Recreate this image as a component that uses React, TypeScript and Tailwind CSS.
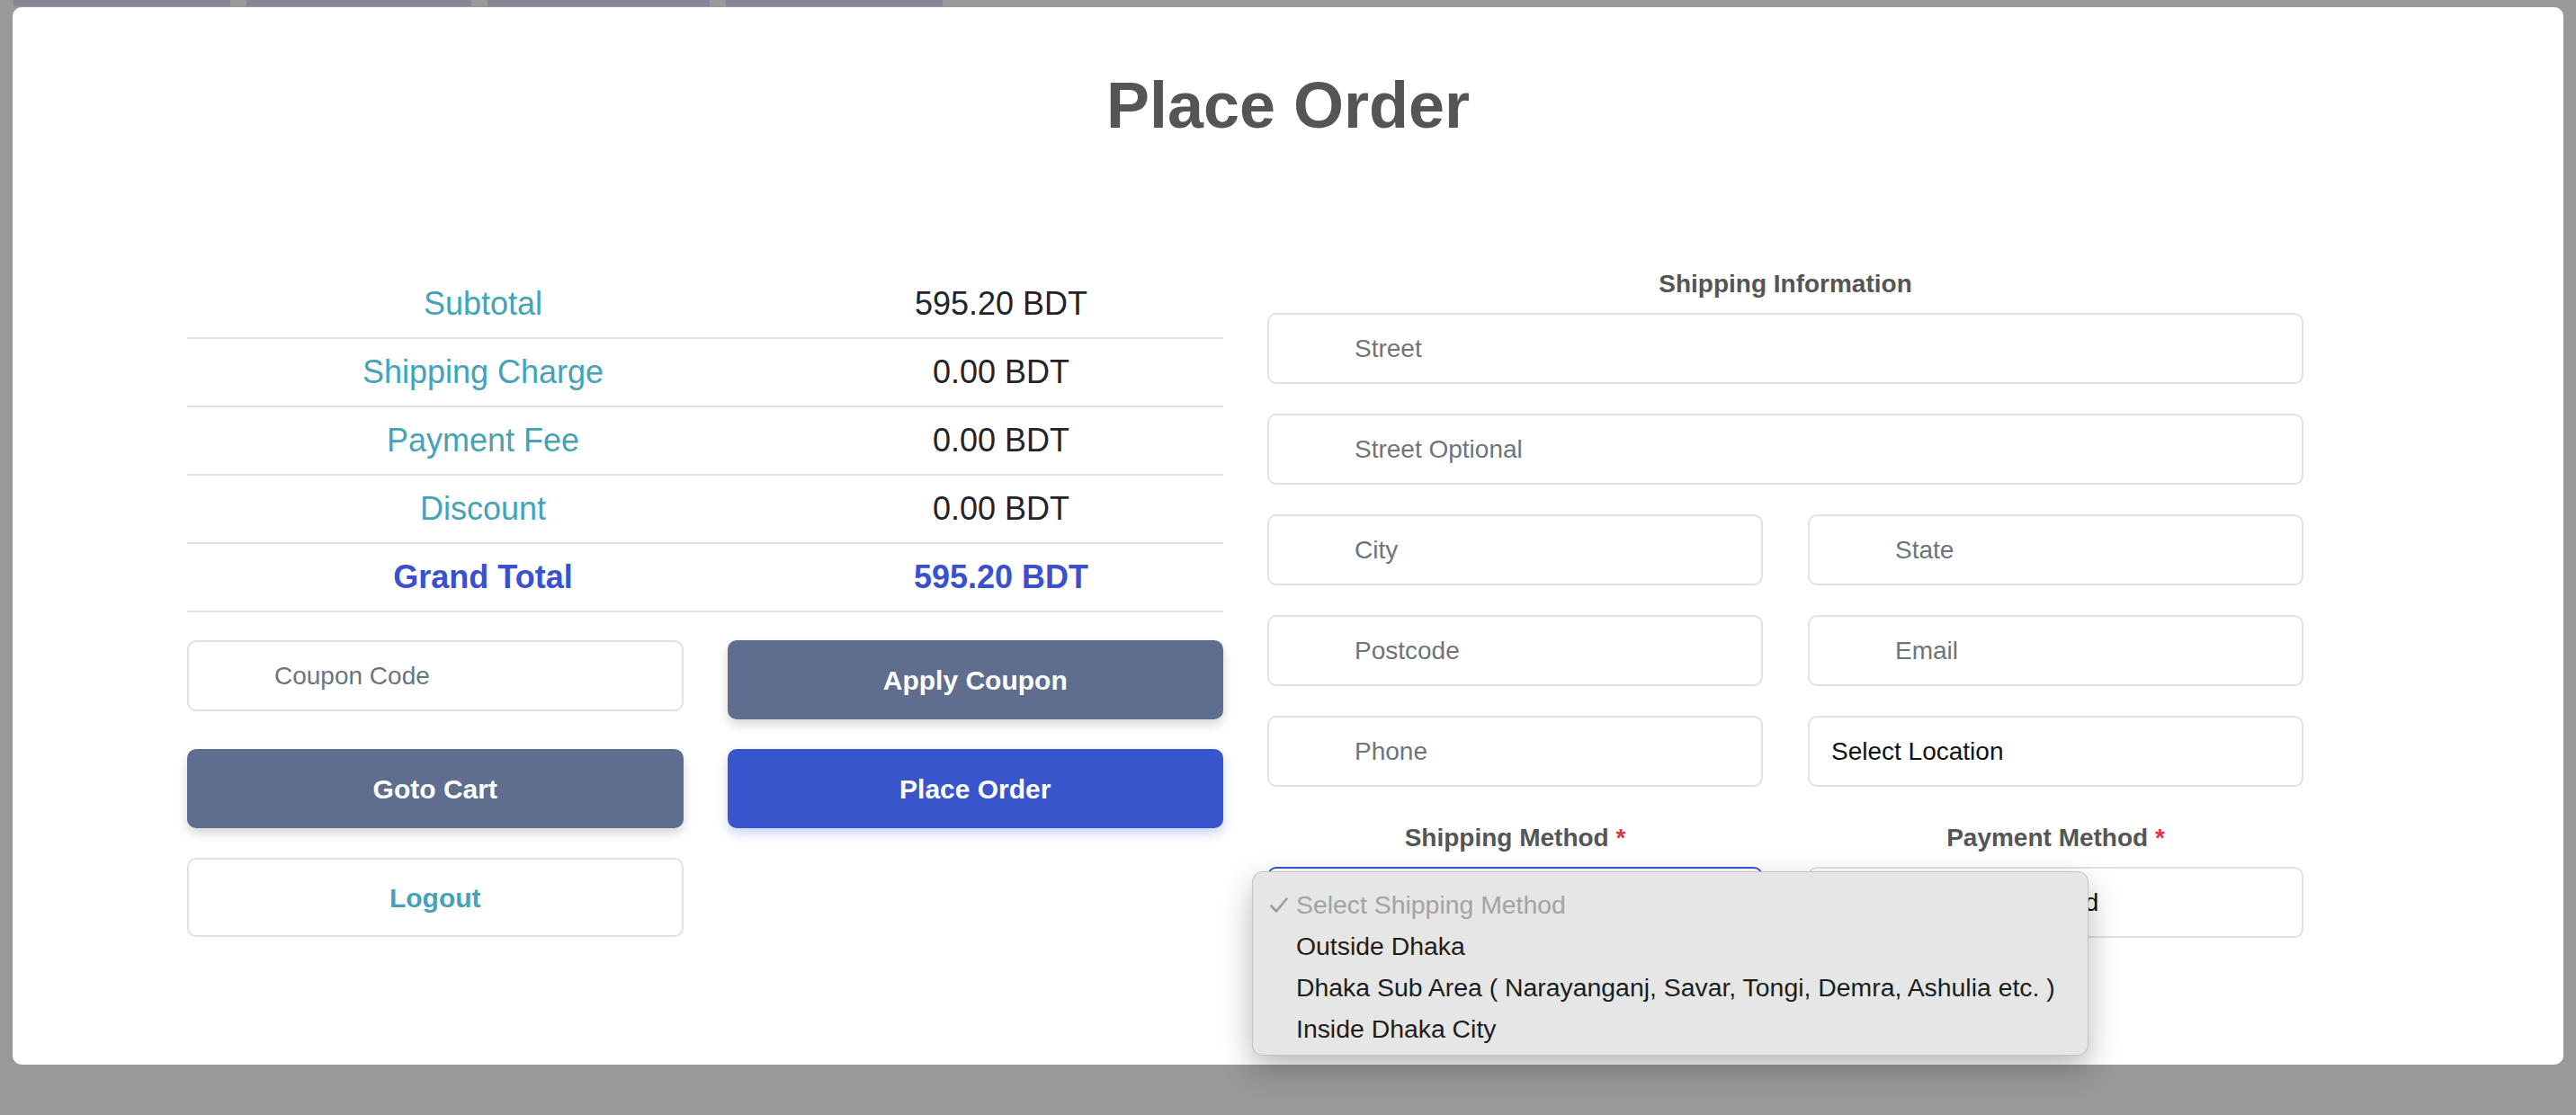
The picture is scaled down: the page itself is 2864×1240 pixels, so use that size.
import React, { FC, ReactElement } from 'react';

const summaryRows = [
  { label: 'Subtotal', value: '595.20 BDT' },
  { label: 'Shipping Charge', value: '0.00 BDT' },
  { label: 'Payment Fee', value: '0.00 BDT' },
  { label: 'Discount', value: '0.00 BDT' },
];

const shippingOptions = [
  'Outside Dhaka',
  'Dhaka Sub Area ( Narayanganj, Savar, Tongi, Demra, Ashulia etc. )',
  'Inside Dhaka City',
];

const inputClass =
  'h-[79px] w-full rounded-[10px] border-2 border-[#dee2e6] bg-white pl-[95px] text-[28px] text-[#212529] outline-none placeholder:text-[#6c757d]';

const Field: FC<{ placeholder: string }> = ({ placeholder }): ReactElement => (
  <input type="text" className={inputClass} placeholder={placeholder} />
);

const CheckMark: FC = (): ReactElement => (
  <svg className="h-[17px] w-[20px]" viewBox="0 0 20 17" fill="none" stroke="#9b9b9b" strokeWidth={2.6}>
    <path d="M1.5 9.5 L7 15.5 L18.5 1.5" strokeLinecap="round" strokeLinejoin="round" />
  </svg>
);

const ShippingDropdown: FC = (): ReactElement => (
  <div className="absolute left-[-17px] top-[5px] z-10 h-[205px] w-[930px] rounded-[12px] border border-black/15 bg-[#e5e6e5] pt-[13px] shadow-[0_14px_34px_rgba(0,0,0,0.28)]">
    <div className="flex h-[46px] items-center text-[28.4px] text-[#a3a3a3]">
      <div className="flex w-[48px] justify-end pr-[9px]">
        <CheckMark />
      </div>
      <span>Select Shipping Method</span>
    </div>
    {shippingOptions.map((opt) => (
      <div key={opt} className="flex h-[46px] items-center pl-[48px] text-[28.4px] text-[#1d1d1d]">
        {opt}
      </div>
    ))}
  </div>
);

const App: FC = (): ReactElement => {
  return (
    <div className="h-[1240px] w-[2864px] overflow-hidden bg-[#999999] font-['Liberation_Sans',Arial,sans-serif]">
      {/* page behind the overlay */}
      <div className="flex h-[8px] gap-[18px] pl-[15px]">
        <div className="h-[7px] w-[241px] bg-[#848797]" />
        <div className="h-[7px] w-[250px] bg-[#848797]" />
        <div className="h-[7px] w-[247px] bg-[#848797]" />
        <div className="h-[7px] w-[241px] bg-[#848797]" />
      </div>

      <div className="mx-[14px] h-[1176px] rounded-[10px] bg-white pt-[66px]">
        <h1 className="text-center text-[72px] font-bold leading-[86px] text-[#555555]">Place Order</h1>

        <div className="mt-[135px] flex gap-[49px] pl-[194px]">
          {/* left: summary + actions */}
          <div className="w-[1152px] pt-[6px]">
            {summaryRows.map((row) => (
              <div
                key={row.label}
                className="grid h-[76px] grid-cols-[658px_494px] items-center border-b-2 border-[#dee2e6] text-center text-[36px]"
              >
                <div className="text-[#46a2b6]">{row.label}</div>
                <div className="text-[#212529]">{row.value}</div>
              </div>
            ))}
            <div className="grid h-[76px] grid-cols-[658px_494px] items-center border-b-2 border-[#dee2e6] text-center text-[36px] font-bold text-[#3b50cf]">
              <div>Grand Total</div>
              <div>595.20 BDT</div>
            </div>

            <div className="mt-[31px] grid grid-cols-2 gap-x-[49px] gap-y-[33px]">
              <div className="h-[88px]">
                <input type="text" className={inputClass} placeholder="Coupon Code" />
              </div>
              <button className="h-[88px] rounded-[10px] bg-[#5f6d8f] text-[30px] font-bold text-white shadow-[0_6px_12px_rgba(0,0,0,0.16)]">
                Apply Coupon
              </button>
              <button className="h-[88px] rounded-[10px] bg-[#5f6d8f] text-[30px] font-bold text-white shadow-[0_6px_12px_rgba(0,0,0,0.16)]">
                Goto Cart
              </button>
              <button className="h-[88px] rounded-[10px] bg-[#3955cc] text-[30px] font-bold text-white shadow-[0_6px_12px_rgba(57,85,204,0.25)]">
                Place Order
              </button>
              <button className="h-[88px] rounded-[10px] border-2 border-[#dee2e6] bg-white text-[30px] font-bold text-[#46a2b6]">
                Logout
              </button>
            </div>
          </div>

          {/* right: shipping information */}
          <div className="w-[1152px]">
            <div className="mb-[11px] text-center text-[28px] font-bold leading-[42px] text-[#555555]">
              Shipping Information
            </div>
            <div className="flex flex-col gap-[33px]">
              <Field placeholder="Street" />
              <Field placeholder="Street Optional" />
              <div className="grid grid-cols-2 gap-[50px]">
                <Field placeholder="City" />
                <Field placeholder="State" />
              </div>
              <div className="grid grid-cols-2 gap-[50px]">
                <Field placeholder="Postcode" />
                <Field placeholder="Email" />
              </div>
              <div className="grid grid-cols-2 gap-[50px]">
                <Field placeholder="Phone" />
                <div className="flex h-[79px] items-center rounded-[10px] border-2 border-[#dee2e6] bg-white pl-[24px] text-[28px] text-[#111111]">
                  Select Location
                </div>
              </div>
            </div>

            <div className="mt-[36px] grid grid-cols-2 gap-[50px]">
              <div>
                <div className="mb-[11px] text-center text-[28px] font-bold leading-[42px] text-[#555555]">
                  Shipping Method <span className="text-[#dc3545]">*</span>
                </div>
                <div className="relative">
                  <div className="h-[79px] rounded-[10px] border-2 border-[#3955cc] bg-white" />
                  <ShippingDropdown />
                </div>
              </div>
              <div>
                <div className="mb-[11px] text-center text-[28px] font-bold leading-[42px] text-[#555555]">
                  Payment Method <span className="text-[#dc3545]">*</span>
                </div>
                <div className="flex h-[79px] items-center rounded-[10px] border-2 border-[#dee2e6] bg-white pl-[24px] text-[28px] text-[#111111]">
                  Select Payment Method
                </div>
              </div>
            </div>
          </div>
        </div>
      </div>
    </div>
  );
};

export default App;
